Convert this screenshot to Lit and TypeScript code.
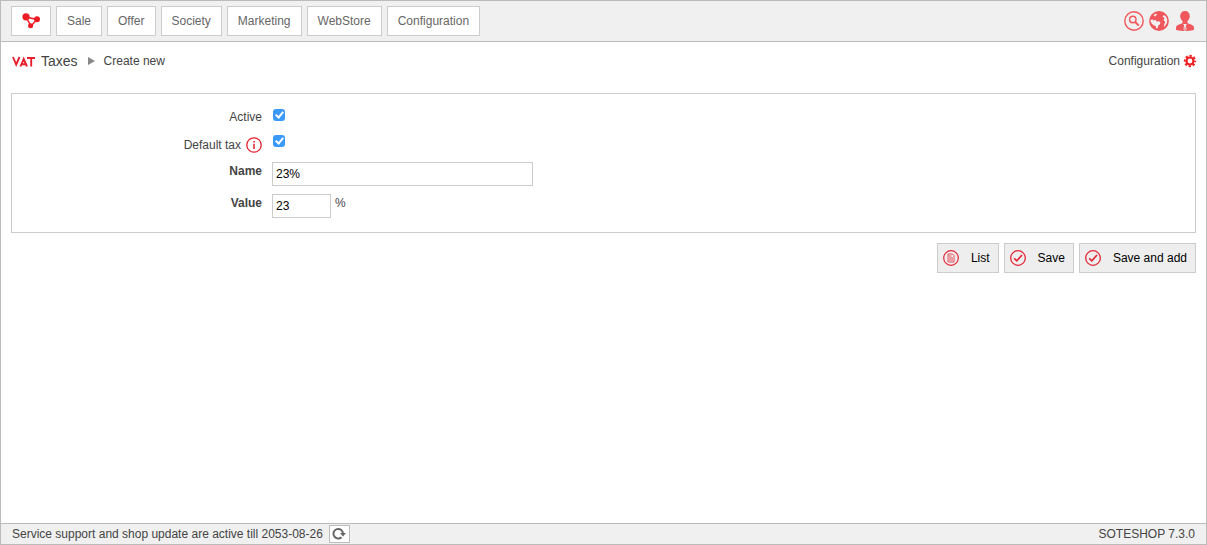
import { LitElement, html, css, svg } from "lit";
import { customElement, property } from "lit/decorators.js";

const icons: Record<string, unknown> = {
  logo: svg`<g fill="#ed1c24" stroke="#ed1c24"><path d="M4 4L15 6.500L9 13Z" fill="none" stroke-width="1.500"/><circle cx="4" cy="3.800" r="3.600" stroke="none"/><circle cx="15" cy="6.300" r="3" stroke="none"/><circle cx="8.600" cy="12.800" r="2.500" stroke="none"/></g>`,
  vat: svg`<path d="M2 1L5.200 8.500L8.500 1M9.500 10.500L12.700 3L16 10.500M10.500 8.200H15M16 2H24M20.200 2V10.500" fill="none" stroke="#e8202e" stroke-width="1.900"/>`,
  search: svg`<g fill="none" stroke="#f0575c"><circle cx="10" cy="10" r="9.200" stroke-width="1.400"/><circle cx="8.800" cy="8.500" r="3.200" stroke-width="1.400"/><path d="M11.200 11L14.800 14.600" stroke-width="1.900"/></g>`,
  globe: svg`<circle cx="10" cy="10" r="9.900" fill="#f0575c"/><path d="M1.200 9.200L3.200 8.200L4.800 9.500L6.500 8.800L7.500 10.500L10 10.200L11.500 11.500L10.800 13.500L9.200 14.500L8.800 17L7 17.200L6.800 15L4.500 14.200L2.500 12.200Z" fill="#f0f0f0"/><path d="M4.500 4.200L7 2.500L8 3.500L6 5.500Z" fill="#f0f0f0"/><path d="M13.500 5L15.500 4.200L17.200 6L18.200 8.500L18 12L16.200 14.800L14.800 16L15.300 13L16.300 11L14.500 9.300L15.500 7.500Z" fill="#f0f0f0"/>`,
  user: svg`<g transform="translate(2 0)"><path d="M9 0C12 0 13.800 2 13.800 5C13.800 7 13 8.800 11.500 10V12C13.500 13.500 18 13.200 18 17V19Q9 21 0 19V17C0 13.200 4.500 13.500 6.500 12V10C5 8.800 4.200 7 4.200 5C4.200 2 6 0 9 0Z" fill="#f0575c"/><path d="M7 13H11L9.900 14.300L10.500 18.500L9 20L7.500 18.500L8.100 14.300Z" fill="#f0f0f0"/><path d="M9 15L9.600 18.500L9 19.300L8.400 18.500Z" fill="#f0575c"/></g>`,
  gear: svg`<g fill="none" stroke="#ed2024"><circle cx="6" cy="6" r="3.500" stroke-width="2.200"/><circle cx="6" cy="6" r="5.200" stroke-width="2" stroke-dasharray="2.300 1.784" stroke-dashoffset="1.150"/></g>`,
  info: svg`<circle cx="8" cy="8" r="7.200" fill="none" stroke="#e8202e" stroke-width="1.300"/><path d="M8 4V5.500M8 6.800V12" stroke="#e8202e" stroke-width="1.500"/>`,
  check: svg`<g fill="none" stroke="#e32636"><circle cx="8" cy="8" r="7.300" stroke-width="1.300"/><path d="M4.200 8.300L6.800 10.800L12 5" stroke-width="1.700"/></g>`,
  list: svg`<g fill="none" stroke="#e32636"><circle cx="8" cy="8" r="7.300" stroke-width="1.200"/><path d="M5 4H9.500L11 5.500V12H5Z" stroke-width=".8"/><path d="M6 6H8.500M6 8H10M6 10H10" stroke-width=".8"/></g>`,
  refresh: svg`<path d="M9.500 10.200A4.800 4.800 0 1 1 11 6.500" fill="none" stroke="#666" stroke-width="2"/><path d="M8 6H14L11 9.500Z" fill="#666"/>`,
};

@customElement("shop-icon")
class ShopIcon extends LitElement {
  @property() name = "";
  @property({ type: Number }) w = 16;
  @property({ type: Number }) h = 16;
  static styles = css`
    :host { display: block; flex: none; }
    svg { display: block; overflow: visible; }
  `;
  render() {
    return html`<svg width=${this.w} height=${this.h} viewBox="0 0 ${this.w} ${this.h}" aria-hidden="true">${icons[this.name]}</svg>`;
  }
}

@customElement("app-root")
class AppRoot extends LitElement {
  static styles = css`
    :host {
      display: flex;
      flex-direction: column;
      box-sizing: border-box;
      min-height: 100vh;
      border: 1px solid #bbb;
      background: #fff;
      color: #444;
      font: 12px/16px "Liberation Sans", Arial, Helvetica, sans-serif;
    }
    * { box-sizing: border-box; }
    a { color: inherit; text-decoration: none; }
    button, input { font: inherit; margin: 0; }
    .header, .footer, .title {
      display: flex;
      align-items: center;
      justify-content: space-between;
    }
    .header {
      padding: 5px 12px 5px 10px;
      background: #f0f0f0;
      border-bottom: 1px solid #bbb;
    }
    .nav, .tools, .crumbs, .actions, .support { display: flex; align-items: center; }
    .nav { gap: 5px; }
    .nav-link {
      display: flex;
      align-items: center;
      height: 30px;
      padding: 0 10px;
      border: 1px solid #ccc;
      background: #fff;
      color: #666;
    }
    .tools { gap: 5px; }
    .title { padding: 10px 10px 0; height: 28px; }
    .section { margin: 0 10px 0 6px; font-size: 14px; }
    .arrow {
      margin-right: 9px;
      border: solid transparent;
      border-width: 4px 0 4px 7px;
      border-left-color: #888;
    }
    .config { display: flex; align-items: center; gap: 4px; }
    .panel {
      display: flex;
      flex-direction: column;
      margin: 23px 10px 0;
      padding: 14px 10px;
      border: 1px solid #ccc;
    }
    .row {
      display: grid;
      grid-template-columns: 240px 1fr;
      column-gap: 10px;
      align-items: start;
    }
    .row.active { height: 28px; }
    .row.default { height: 26px; }
    .row.text { height: 32px; }
    .row.text:last-child { height: 24px; }
    .label {
      display: flex;
      justify-content: flex-end;
      align-items: center;
      gap: 5px;
      padding-top: 1px;
    }
    .strong { font-weight: bold; }
    .field { display: flex; gap: 4px; }
    .unit { padding-top: 1px; }
    .tick {
      appearance: none;
      display: flex;
      justify-content: center;
      width: 12px;
      height: 12px;
      margin: 1px;
      border-radius: 3px;
      background: #3b99fc;
    }
    .default .tick { margin-top: -1px; }
    .tick:checked::after {
      content: "";
      box-sizing: border-box;
      width: 5px;
      height: 8px;
      margin-top: 1px;
      border: solid #fff;
      border-width: 0 2px 2px 0;
      transform: rotate(40deg);
    }
    .box {
      height: 24px;
      width: 261px;
      padding: 0 3px;
      border: 1px solid #ccc;
      border-radius: 0;
      background: #fff;
      color: #000;
    }
    .box.short { width: 59px; }
    .actions { justify-content: flex-end; gap: 5px; padding: 10px; }
    .action {
      display: flex;
      align-items: center;
      gap: 12px;
      height: 30px;
      padding: 0 8px 0 5px;
      border: 1px solid #ccc;
      background: #eee;
      color: #000;
    }
    .footer {
      height: 21px;
      margin-top: auto;
      padding: 0 11px;
      border-top: 1px solid #bbb;
      background: #f0f0f0;
    }
    .support { gap: 6px; }
    .refresh {
      display: grid;
      place-items: center;
      width: 21px;
      height: 18px;
      padding: 0;
      border: 1px solid #bbb;
      background: #fff;
    }
  `;

  render() {
    return html`
      <header class="header">
        <nav class="nav">
          <a class="nav-link" href="#" aria-label="Home"><shop-icon name="logo" w="18" h="16"></shop-icon></a>
          ${["Sale", "Offer", "Society", "Marketing", "WebStore", "Configuration"].map(
            (item) => html`<a class="nav-link" href="#">${item}</a>`
          )}
        </nav>
        <div class="tools">
          <a href="#" aria-label="Search"><shop-icon name="search" w="20" h="20"></shop-icon></a>
          <a href="#" aria-label="Language"><shop-icon name="globe" w="20" h="20"></shop-icon></a>
          <a href="#" aria-label="Account"><shop-icon name="user" w="20" h="20"></shop-icon></a>
        </div>
      </header>
      <div class="title">
        <div class="crumbs">
          <shop-icon name="vat" w="24" h="10"></shop-icon>
          <a class="section" href="#">Taxes</a>
          <span class="arrow"></span>
          <span>Create new</span>
        </div>
        <a class="config" href="#">Configuration<shop-icon name="gear" w="12" h="12"></shop-icon></a>
      </div>
      <form @submit=${(e: Event) => e.preventDefault()}>
        <div class="panel">
          <div class="row active">
            <label class="label" for="active">Active</label>
            <div class="field"><input class="tick" type="checkbox" id="active" checked /></div>
          </div>
          <div class="row default">
            <label class="label" for="default">Default tax<shop-icon name="info"></shop-icon></label>
            <div class="field"><input class="tick" type="checkbox" id="default" checked /></div>
          </div>
          <div class="row text">
            <label class="label strong" for="name">Name</label>
            <div class="field"><input class="box" id="name" type="text" value="23%" /></div>
          </div>
          <div class="row text">
            <label class="label strong" for="value">Value</label>
            <div class="field"><input class="box short" id="value" type="text" value="23" /><span class="unit">%</span></div>
          </div>
        </div>
        <div class="actions">
          <button class="action" type="button"><shop-icon name="list"></shop-icon>List</button>
          <button class="action" type="submit"><shop-icon name="check"></shop-icon>Save</button>
          <button class="action" type="submit"><shop-icon name="check"></shop-icon>Save and add</button>
        </div>
      </form>
      <footer class="footer">
        <div class="support">
          <span>Service support and shop update are active till 2053-08-26</span>
          <button class="refresh" type="button" aria-label="Refresh"><shop-icon name="refresh" w="14" h="14"></shop-icon></button>
        </div>
        <span>SOTESHOP 7.3.0</span>
      </footer>
    `;
  }
}
